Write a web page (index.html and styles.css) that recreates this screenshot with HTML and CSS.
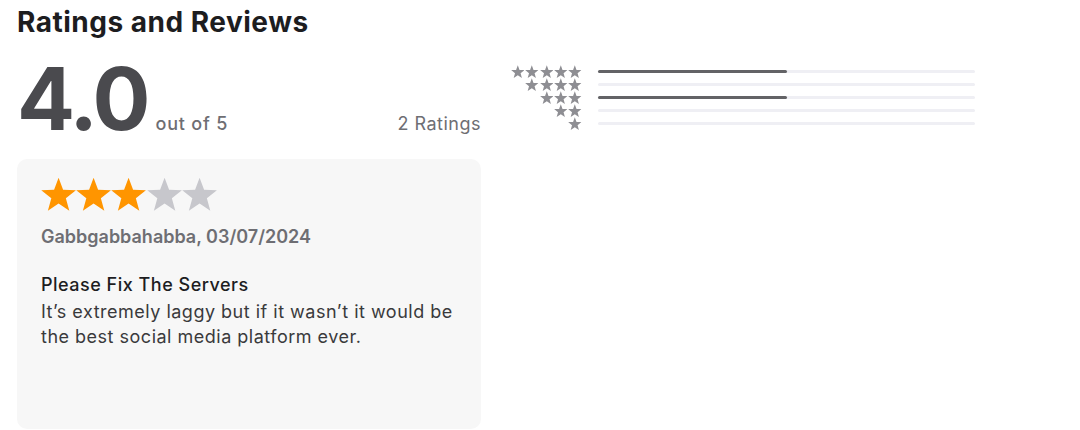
FILE: index.html
```html
<!DOCTYPE html>
<html lang="en">
<head>
  <meta charset="UTF-8">
  <title>Ratings and Reviews</title>
  <link rel="stylesheet" href="styles.css">
</head>
<body>
  <svg class="defs" width="0" height="0">
    <symbol id="star" viewBox="0 0 24 24">
      <path d="M12 .5L15.09 8.75L23.89 9.14L16.99 14.62L19.35 23.11L12 18.25L4.65 23.11L7.01 14.62L.11 9.14L8.91 8.75Z"/>
    </symbol>
  </svg>

  <h1>Ratings and Reviews</h1>

  <div class="summary">
    <div class="score">
      <div class="score-main">
        <span class="score-value">4.0</span>
        <span class="score-max">out of 5</span>
      </div>
      <span class="score-count">2 Ratings</span>
    </div>

    <div class="histogram">
      <div class="hist-row">
        <div class="hist-stars">
          <svg><use href="#star"/></svg><svg><use href="#star"/></svg><svg><use href="#star"/></svg><svg><use href="#star"/></svg><svg><use href="#star"/></svg>
        </div>
        <div class="hist-bar"><div class="hist-fill" style="width: 50%"></div></div>
      </div>
      <div class="hist-row">
        <div class="hist-stars">
          <svg><use href="#star"/></svg><svg><use href="#star"/></svg><svg><use href="#star"/></svg><svg><use href="#star"/></svg>
        </div>
        <div class="hist-bar"><div class="hist-fill" style="width: 0%"></div></div>
      </div>
      <div class="hist-row">
        <div class="hist-stars">
          <svg><use href="#star"/></svg><svg><use href="#star"/></svg><svg><use href="#star"/></svg>
        </div>
        <div class="hist-bar"><div class="hist-fill" style="width: 50%"></div></div>
      </div>
      <div class="hist-row">
        <div class="hist-stars">
          <svg><use href="#star"/></svg><svg><use href="#star"/></svg>
        </div>
        <div class="hist-bar"><div class="hist-fill" style="width: 0%"></div></div>
      </div>
      <div class="hist-row">
        <div class="hist-stars">
          <svg><use href="#star"/></svg>
        </div>
        <div class="hist-bar"><div class="hist-fill" style="width: 0%"></div></div>
      </div>
    </div>
  </div>

  <div class="review">
    <div class="review-stars">
      <svg class="on"><use href="#star"/></svg><svg class="on"><use href="#star"/></svg><svg class="on"><use href="#star"/></svg><svg><use href="#star"/></svg><svg><use href="#star"/></svg>
    </div>
    <div class="review-author">Gabbgabbahabba, 03/07/2024</div>
    <h3 class="review-title">Please Fix The Servers</h3>
    <p class="review-body">It’s extremely laggy but if it wasn’t it would be the best social media platform ever.</p>
  </div>
</body>
</html>
```

FILE: styles.css
```css
* {
  box-sizing: border-box;
}

html, body {
  margin: 0;
  padding: 0;
  background: #fff;
  color: #1d1d1f;
  font-family: 'Inter', 'Noto Sans', sans-serif;
}

body {
  padding: 6px 17px 0;
}

.defs {
  position: absolute;
}

h1 {
  margin: 0;
  font-size: 28px;
  font-weight: 700;
  line-height: 32px;
  letter-spacing: 0.5px;
}

.summary {
  display: flex;
  gap: 29px;
  margin-top: 26px;
}

.score {
  width: 464px;
  display: flex;
  justify-content: space-between;
  align-items: baseline;
  height: 75px;
}

.score-main {
  display: flex;
  align-items: baseline;
  gap: 8px;
}

.score-value {
  font-size: 86px;
  font-weight: 700;
  line-height: 70px;
  letter-spacing: -3px;
  color: #4a4a4e;
}

.score-max {
  font-size: 18px;
  font-weight: 500;
  letter-spacing: 0.8px;
  color: #6e6e73;
}

.score-count {
  font-size: 18px;
  letter-spacing: 0.5px;
  color: #6e6e73;
}

.histogram {
  display: flex;
  flex-direction: column;
  padding-top: 1px;
}

.hist-row {
  display: flex;
  align-items: center;
  gap: 16px;
  height: 13px;
}

.hist-stars {
  width: 72px;
  display: flex;
  justify-content: flex-end;
  gap: 0.8px;
}

.hist-stars svg {
  width: 13.6px;
  height: 13.4px;
  fill: #8e8e93;
}

.hist-bar {
  width: 377px;
  height: 3px;
  border-radius: 2px;
  background: #efeff4;
}

.hist-fill {
  height: 100%;
  border-radius: 2px;
  background: #636366;
}

.review {
  width: 464px;
  height: 270px;
  margin-top: 20px;
  padding: 18px 24px;
  border-radius: 10px;
  background: #f7f7f7;
}

.review-stars {
  display: flex;
}

.review-stars svg {
  width: 35.2px;
  height: 35px;
  fill: #c7c7cc;
}

.review-stars svg.on {
  fill: #ff9500;
}

.review-author {
  margin-top: 14px;
  font-size: 18px;
  font-weight: 600;
  color: #6e6e73;
}

.review-title {
  margin: 25px 0 0;
  font-size: 18px;
  font-weight: 500;
  line-height: 25px;
  letter-spacing: 0.5px;
}

.review-body {
  margin: 2px 0 0;
  font-size: 18px;
  line-height: 25px;
  letter-spacing: 0.5px;
  color: #3a3a3c;
}
```
